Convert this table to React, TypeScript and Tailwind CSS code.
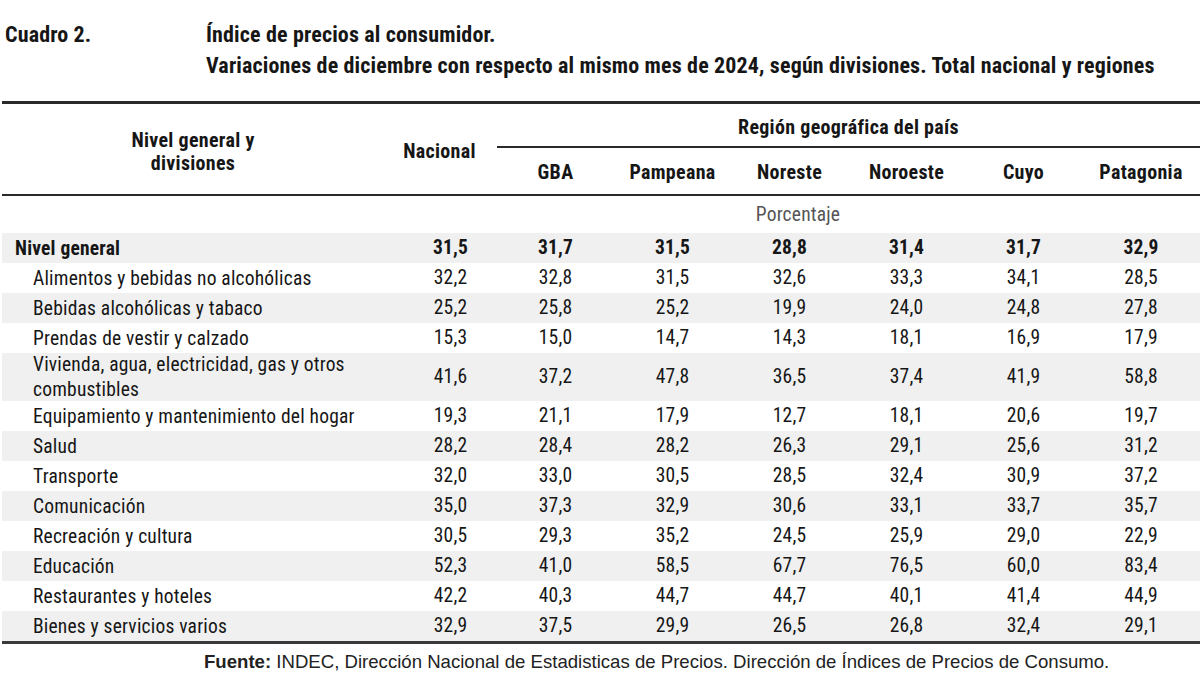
const rows: { label: string; bold?: boolean; double?: boolean; v: string[] }[] = [
  { label: "Nivel general", bold: true, v: ["31,5", "31,7", "31,5", "28,8", "31,4", "31,7", "32,9"] },
  { label: "Alimentos y bebidas no alcohólicas", v: ["32,2", "32,8", "31,5", "32,6", "33,3", "34,1", "28,5"] },
  { label: "Bebidas alcohólicas y tabaco", v: ["25,2", "25,8", "25,2", "19,9", "24,0", "24,8", "27,8"] },
  { label: "Prendas de vestir y calzado", v: ["15,3", "15,0", "14,7", "14,3", "18,1", "16,9", "17,9"] },
  { label: "Vivienda, agua, electricidad, gas y otros combustibles", double: true, v: ["41,6", "37,2", "47,8", "36,5", "37,4", "41,9", "58,8"] },
  { label: "Equipamiento y mantenimiento del hogar", v: ["19,3", "21,1", "17,9", "12,7", "18,1", "20,6", "19,7"] },
  { label: "Salud", v: ["28,2", "28,4", "28,2", "26,3", "29,1", "25,6", "31,2"] },
  { label: "Transporte", v: ["32,0", "33,0", "30,5", "28,5", "32,4", "30,9", "37,2"] },
  { label: "Comunicación", v: ["35,0", "37,3", "32,9", "30,6", "33,1", "33,7", "35,7"] },
  { label: "Recreación y cultura", v: ["30,5", "29,3", "35,2", "24,5", "25,9", "29,0", "22,9"] },
  { label: "Educación", v: ["52,3", "41,0", "58,5", "67,7", "76,5", "60,0", "83,4"] },
  { label: "Restaurantes y hoteles", v: ["42,2", "40,3", "44,7", "44,7", "40,1", "41,4", "44,9"] },
  { label: "Bienes y servicios varios", v: ["32,9", "37,5", "29,9", "26,5", "26,8", "32,4", "29,1"] },
];

const regions = ["GBA", "Pampeana", "Noreste", "Noroeste", "Cuyo", "Patagonia"];

export default function App() {
  return (
    <div className="w-[1200px] h-[692px] bg-white text-[#161616] font-['Roboto_Condensed',sans-serif] overflow-hidden">
      {/* Title */}
      <div className="flex pt-[19px] pl-[5px] font-bold text-[22px] leading-[31px] tracking-[0.15px]">
        <div className="w-[201px] shrink-0">Cuadro 2.</div>
        <div className="flex flex-col">
          <div>Índice de precios al consumidor.</div>
          <div>Variaciones de diciembre con respecto al mismo mes de 2024, según divisiones. Total nacional y regiones</div>
        </div>
      </div>

      {/* Table */}
      <div className="ml-[2px] mt-[20px]">
        <div className="h-[3px] bg-[#2a2a2a]" />
        <div className="grid grid-cols-[398px_97px_117px_117px_117px_117px_117px_118px] font-bold text-[20px] tracking-[0.3px]">
          <div className="row-span-2 flex flex-col items-center justify-center pr-[16px] leading-[23px] pt-[5px]">
            <span>Nivel general y</span>
            <span>divisiones</span>
          </div>
          <div className="row-span-2 flex items-center justify-center pr-[18px] pt-[3px]">Nacional</div>
          <div className="col-span-6 h-[44px] flex items-center justify-center border-b-2 border-[#2a2a2a] pt-[3px]">
            Región geográfica del país
          </div>
          {regions.map((r) => (
            <div key={r} className="h-[46px] flex items-center justify-center pt-[1px]">
              {r}
            </div>
          ))}
        </div>
        <div className="h-[2px] bg-[#2a2a2a]" />
        <div className="grid grid-cols-[398px_97px_117px_117px_117px_117px_117px_118px] text-[19.5px] tracking-[0.2px]">
          <div className="col-start-2 col-span-7 h-[37px] flex items-center justify-center text-[#555] pr-[4px] pt-[1px]">
            Porcentaje
          </div>
          {rows.map((row, i) => {
            const bg = i % 2 === 0 ? "bg-[#f0f0f0]" : "bg-white";
            const h = row.double ? "h-[48px]" : "h-[30px]";
            return (
              <div key={row.label} className={`contents ${row.bold ? "font-bold" : ""}`}>
                <div
                  className={`${bg} ${h} col-start-1 flex items-center ${row.bold ? "pl-[13px]" : "pl-[31px]"} leading-[25px] pr-[40px]`}
                >
                  {row.label}
                </div>
                {row.v.map((val, j) => (
                  <div key={j} className={`${bg} ${h} flex items-center justify-center ${j === 0 ? "pl-[4px]" : ""}`}>
                    {val}
                  </div>
                ))}
              </div>
            );
          })}
        </div>
        <div className="h-[3px] bg-[#3a3a3a]" />
      </div>

      {/* Footer */}
      <div className="pl-[204px] pt-[4px] text-[18.6px] text-[#222] font-['Liberation_Sans',Arial,sans-serif]">
        <span className="font-bold">Fuente:</span> INDEC, Dirección Nacional de Estadisticas de Precios. Dirección de Índices de Precios de Consumo.
      </div>
    </div>
  );
}
